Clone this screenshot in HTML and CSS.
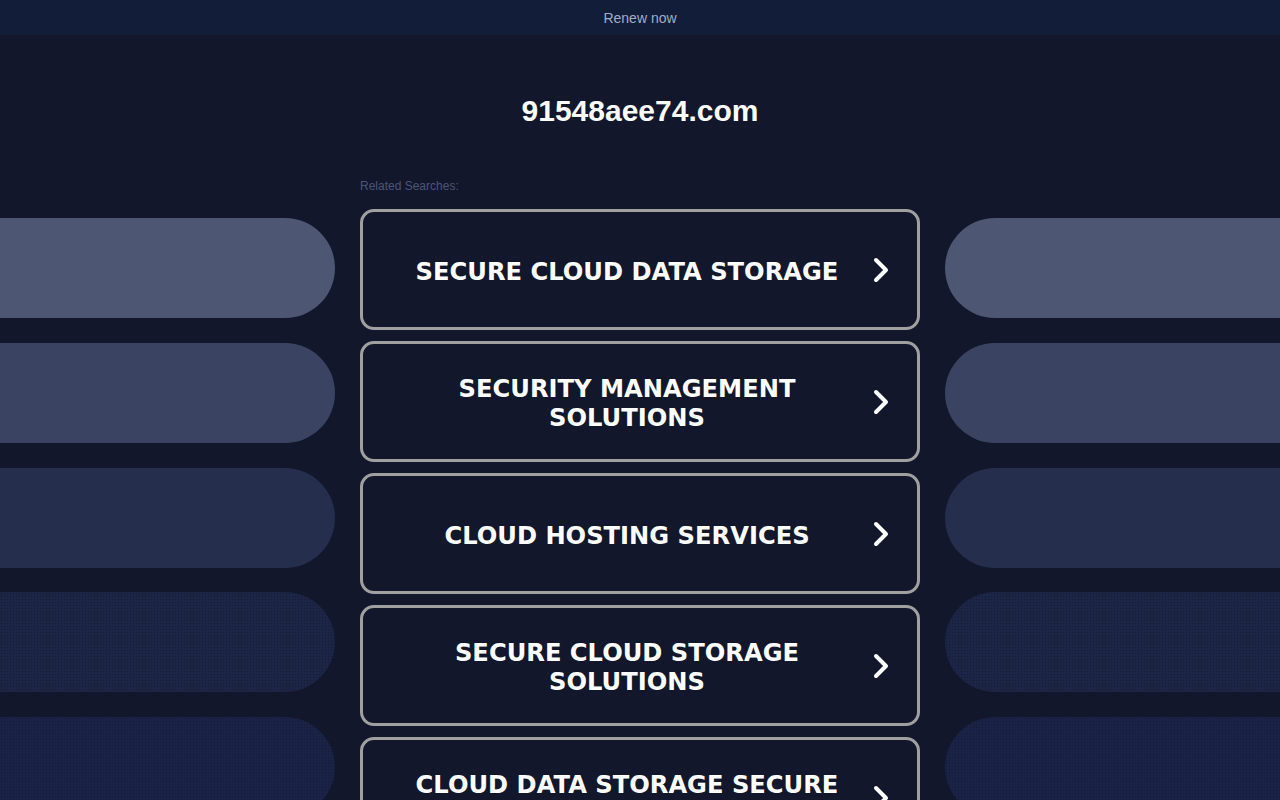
FILE: index.html
```html
<!DOCTYPE html>
<html lang="en">
<head>
    <meta charset="UTF-8">
    <meta name="viewport" content="width=device-width, initial-scale=1.0">
    <title>91548aee74.com</title>
    <link rel="stylesheet" href="styles.css">
</head>
<body>

<!-- Top banner -->
<div class="banner">
    <a href="#" class="banner-link">Renew now</a>
</div>

<h1 class="domain">91548aee74.com</h1>

<div class="layout">
    <!-- Left decoration -->
    <div class="side side-left">
        <div class="pill p1"></div>
        <div class="pill p2"></div>
        <div class="pill p3"></div>
        <div class="pill p4"></div>
        <div class="pill p5"></div>
    </div>

    <!-- Related searches -->
    <div class="searches">
        <p class="label">Related Searches:</p>

        <a href="#" class="search">
            <span class="search-text">SECURE CLOUD DATA STORAGE</span>
            <svg class="chevron" viewBox="0 0 26 30"><path d="M11 5 L21 15 L11 25"/></svg>
        </a>
        <a href="#" class="search">
            <span class="search-text">SECURITY MANAGEMENT SOLUTIONS</span>
            <svg class="chevron" viewBox="0 0 26 30"><path d="M11 5 L21 15 L11 25"/></svg>
        </a>
        <a href="#" class="search">
            <span class="search-text">CLOUD HOSTING SERVICES</span>
            <svg class="chevron" viewBox="0 0 26 30"><path d="M11 5 L21 15 L11 25"/></svg>
        </a>
        <a href="#" class="search">
            <span class="search-text">SECURE CLOUD STORAGE SOLUTIONS</span>
            <svg class="chevron" viewBox="0 0 26 30"><path d="M11 5 L21 15 L11 25"/></svg>
        </a>
        <a href="#" class="search">
            <span class="search-text">CLOUD DATA STORAGE SECURE SOLUTIONS</span>
            <svg class="chevron" viewBox="0 0 26 30"><path d="M11 5 L21 15 L11 25"/></svg>
        </a>
    </div>

    <!-- Right decoration -->
    <div class="side side-right">
        <div class="pill p1"></div>
        <div class="pill p2"></div>
        <div class="pill p3"></div>
        <div class="pill p4"></div>
        <div class="pill p5"></div>
    </div>
</div>

</body>
</html>
```

FILE: styles.css
```css
/* Reset */
* {
    margin: 0;
    padding: 0;
    box-sizing: border-box;
}

body {
    font-family: 'Liberation Sans', Arial, sans-serif;
    background-color: #12172b;
    color: #fff;
}

/* Banner */
.banner {
    height: 35px;
    background-color: #111d39;
    display: flex;
    justify-content: center;
    align-items: center;
}

.banner-link {
    color: #a0aec4;
    font-size: 14px;
    text-decoration: none;
}

/* Domain title */
.domain {
    margin-top: 59px;
    font-size: 30px;
    line-height: 34px;
    font-weight: bold;
    text-align: center;
    color: #fff;
}

/* Three column layout */
.layout {
    display: grid;
    grid-template-columns: 335px 560px 335px;
    column-gap: 25px;
    margin-top: 51px;
}

.side {
    display: flex;
    flex-direction: column;
    gap: 24.75px;
    padding-top: 39px;
}

.pill {
    height: 100px;
}

.side-left .pill {
    border-radius: 0 50px 50px 0;
}

.side-right .pill {
    border-radius: 50px 0 0 50px;
}

.p1 { background-color: #4d5773; }
.p2 { background-color: #3a4462; }
.p3 { background-color: #262e4d; }

.p4,
.p5 {
    background-color: #1c2546;
    background-image: radial-gradient(rgba(10, 16, 36, 0.45) 0.6px, transparent 0.8px);
    background-size: 3px 3px;
}

.p5 {
    background-color: #1a2345;
}

/* Related searches */
.label {
    font-size: 12px;
    line-height: 14px;
    color: #4b5677;
    margin-bottom: 16px;
}

.search {
    display: flex;
    align-items: center;
    height: 121px;
    margin-bottom: 11px;
    padding: 5px 26px 0;
    border: 3px solid #a0a0a0;
    border-radius: 14px;
    text-decoration: none;
    color: #fff;
}

.search-text {
    flex: 1;
    text-align: center;
    font-family: 'DejaVu Sans', Verdana, sans-serif;
    font-weight: bold;
    font-size: 24.2px;
    line-height: 29px;
}

.chevron {
    width: 26px;
    height: 30px;
    margin-top: -5px;
    fill: none;
    stroke: #fff;
    stroke-width: 4;
    stroke-linecap: round;
    stroke-linejoin: round;
}
```
